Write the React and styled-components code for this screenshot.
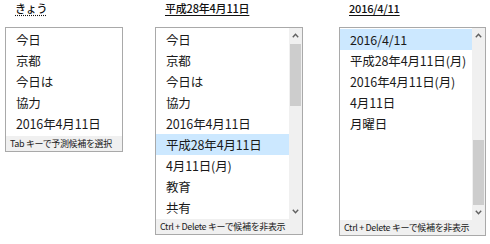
import React from "react";
import styled, { createGlobalStyle } from "styled-components";

const GlobalStyle = createGlobalStyle`
  html, body {
    margin: 0;
    padding: 0;
    background: #fff;
  }
  body {
    font-family: "Noto Sans CJK JP", "Noto Sans", sans-serif;
    color: #1a1a1a;
  }
`;

const columns = [
  {
    heading: "きょう",
    dotted: true,
    width: 118,
    gap: 32,
    height: 125,
    items: ["今日", "京都", "今日は", "協力", "2016年4月11日"],
    footer: "Tab キーで予測候補を選択",
  },
  {
    heading: "平成28年4月11日",
    width: 148,
    gap: 36,
    height: 208,
    scroll: { top: 1, size: 62 },
    selected: 5,
    items: [
      "今日",
      "京都",
      "今日は",
      "協力",
      "2016年4月11日",
      "平成28年4月11日",
      "4月11日(月)",
      "教育",
      "共有",
    ],
    footer: "Ctrl + Delete キーで候補を非表示",
  },
  {
    heading: "2016/4/11",
    width: 147,
    gap: 0,
    height: 209,
    scroll: { top: 97, size: 65 },
    selected: 0,
    items: [
      "2016/4/11",
      "平成28年4月11日(月)",
      "2016年4月11日(月)",
      "4月11日",
      "月曜日",
    ],
    footer: "Ctrl + Delete キーで候補を非表示",
  },
];

export default function App() {
  return (
    <>
      <GlobalStyle />
      <Page>
        {columns.map((col) => (
          <Column key={col.heading} $w={col.width} $gap={col.gap}>
            <Heading $dotted={col.dotted}>{col.heading}</Heading>
            <Popup $h={col.height}>
              <Body>
                <List>
                  {col.items.map((item, i) => (
                    <Item key={item} $selected={i === col.selected}>
                      {item}
                    </Item>
                  ))}
                </List>
                {col.scroll && (
                  <ScrollBar>
                    <Arrow>
                      <Chevron up />
                    </Arrow>
                    <Track>
                      <Thumb
                        style={{ top: col.scroll.top, height: col.scroll.size }}
                      />
                    </Track>
                    <Arrow>
                      <Chevron />
                    </Arrow>
                  </ScrollBar>
                )}
              </Body>
              <Footer>{col.footer}</Footer>
            </Popup>
          </Column>
        ))}
      </Page>
    </>
  );
}

const Chevron = ({ up }) => (
  <svg width="7" height="5" viewBox="0 0 7 5">
    <path
      d={up ? "M0.8 4.2 L3.5 1.3 L6.2 4.2" : "M0.8 0.8 L3.5 3.7 L6.2 0.8"}
      fill="none"
      stroke="#606060"
      strokeWidth="1.4"
    />
  </svg>
);

const Page = styled.div`
  display: flex;
  align-items: flex-start;
  padding: 0 0 0 5px;
  width: 490px;
  height: 244px;
  box-sizing: border-box;
`;

const Column = styled.div`
  width: ${({ $w }) => $w}px;
  margin-right: ${({ $gap }) => $gap}px;
  display: flex;
  flex-direction: column;
  flex-shrink: 0;
`;

const Heading = styled.div`
  height: 27px;
  padding: 2px 0 0 10px;
  box-sizing: border-box;
  font-size: 11px;
  line-height: 12px;
  font-weight: 500;
  color: #111;
  letter-spacing: -0.2px;
  text-decoration: underline;
  text-decoration-style: ${({ $dotted }) => ($dotted ? "dotted" : "solid")};
  text-underline-offset: 2px;
  white-space: nowrap;
`;

const Popup = styled.div`
  height: ${({ $h }) => $h}px;
  border: 1px solid #a9a9a9;
  background: #fff;
  display: flex;
  flex-direction: column;
  box-sizing: border-box;
`;

const Body = styled.div`
  flex: 1;
  display: flex;
  min-height: 0;
`;

const List = styled.div`
  flex: 1;
  padding-top: 1px;
`;

const Item = styled.div`
  height: 21px;
  line-height: 21px;
  padding-left: 10px;
  font-size: 12.5px;
  letter-spacing: -0.15px;
  color: #1a1a1a;
  white-space: nowrap;
  background: ${({ $selected }) => ($selected ? "#cce8ff" : "transparent")};
`;

const ScrollBar = styled.div`
  width: 13px;
  background: #f0f0f0;
  display: flex;
  flex-direction: column;
`;

const Arrow = styled.div`
  height: 15px;
  display: flex;
  align-items: center;
  justify-content: center;
`;

const Track = styled.div`
  flex: 1;
  position: relative;
`;

const Thumb = styled.div`
  position: absolute;
  left: 1px;
  right: 1px;
  background: #cdcdcd;
`;

const Footer = styled.div`
  height: 15px;
  line-height: 15px;
  padding-left: 4px;
  background: #f0f0f0;
  font-size: 9px;
  letter-spacing: -0.35px;
  color: #222;
  white-space: nowrap;
  overflow: hidden;
`;
